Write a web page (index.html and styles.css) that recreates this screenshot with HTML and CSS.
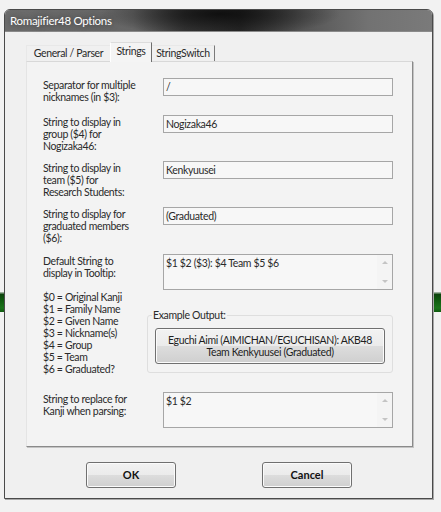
FILE: index.html
```html
<!DOCTYPE html>
<html>
<head>
<meta charset="utf-8">
<title>Romajifier48 Options</title>
<link rel="stylesheet" href="styles.css">
</head>
<body>
<div class="desk-stripe"></div>
<div class="window">
  <div class="titlebar"><span class="title">Romajifier48 Options</span></div>
  <div class="client">
    <div class="tabs">
      <div class="tab tab-general">General / Parser</div>
      <div class="tab tab-strings active">Strings</div>
      <div class="tab tab-switch">StringSwitch</div>
    </div>
    <div class="panel">
      <div class="row r1">
        <div class="label">Separator for multiple<br>nicknames (in $3):</div>
        <div class="field">/</div>
      </div>
      <div class="row r2">
        <div class="label">String to display in<br>group ($4) for<br>Nogizaka46:</div>
        <div class="field">Nogizaka46</div>
      </div>
      <div class="row r3">
        <div class="label">String to display in<br>team ($5) for<br>Research Students:</div>
        <div class="field">Kenkyuusei</div>
      </div>
      <div class="row r4">
        <div class="label">String to display for<br>graduated members<br>($6):</div>
        <div class="field">(Graduated)</div>
      </div>
      <div class="row r5">
        <div class="label">Default String to<br>display in Tooltip:</div>
        <div class="field multi">
          <span class="multi-text">$1 $2 ($3): $4 Team $5 $6</span>
          <span class="scroll"><span class="arrow up"></span><span class="arrow down"></span></span>
        </div>
      </div>
      <div class="legend-row">
        <div class="legend-list">$0 = Original Kanji<br>$1 = Family Name<br>$2 = Given Name<br>$3 = Nickname(s)<br>$4 = Group<br>$5 = Team<br>$6 = Graduated?</div>
        <fieldset class="group">
          <legend class="group-title">Example Output:</legend>
          <div class="example-btn">Eguchi Aimi (AIMICHAN/EGUCHISAN): AKB48<br>Team Kenkyuusei (Graduated)</div>
        </fieldset>
      </div>
      <div class="row r6">
        <div class="label">String to replace for<br>Kanji when parsing:</div>
        <div class="field multi">
          <span class="multi-text">$1 $2</span>
          <span class="scroll"><span class="arrow up"></span><span class="arrow down"></span></span>
        </div>
      </div>
    </div>
    <div class="buttons">
      <div class="btn btn-ok">OK</div>
      <div class="btn btn-cancel">Cancel</div>
    </div>
  </div>
</div>
</body>
</html>
```
FILE: styles.css
```css
* { box-sizing: border-box; }
html, body { margin: 0; padding: 0; }
body {
  width: 441px;
  height: 512px;
  background: #f2f2f2;
  font-family: "Lato", "Liberation Sans", sans-serif;
  font-size: 10.5px;
  letter-spacing: -0.35px;
  color: #2a2a2a;
  position: relative;
  overflow: hidden;
  padding-top: 9px;
}
.desk-stripe {
  position: absolute;
  left: 0; right: 0;
  top: 292px; height: 20px;
  background: linear-gradient(#9bb09b 0, #9bb09b 1px, #0c420c 2px, #0f5a0f 40%, #1a741a 80%, #0f5a0f 100%);
}
.window {
  position: relative;
  margin-left: 4px;
  width: 429px;
  height: 490px;
  border: 1px solid #4a4a4a;
  border-radius: 6px 6px 0 0;
  box-shadow: 1px 1px 0 #a8a8a8;
  background: #f0f0f0;
  display: flex;
  flex-direction: column;
}
.titlebar {
  height: 22px;
  flex: none;
  border-radius: 5px 5px 0 0;
  background:
    radial-gradient(ellipse 120px 22px at 215px 4px, rgba(10,10,10,0.85), rgba(10,10,10,0) 100%),
    linear-gradient(to right, #6c6c6c 0%, #656565 30%, #3a3a3a 42%, #2a2a2a 55%, #555 70%, #727272 85%, #7a7a7a 100%);
  display: flex;
  align-items: center;
  padding-left: 5px;
  border-bottom: 1px solid #8a8a8a;
}
.title {
  color: #ffffff;
  font-size: 11.5px;
  letter-spacing: -0.3px;
  text-shadow: 0 0 6px rgba(0,0,0,0.5);
}
.client {
  flex: 1;
  padding: 10px 0 0 21px;
}
.tabs {
  display: flex;
  align-items: flex-end;
  height: 19px;
  position: relative;
  z-index: 1;
}
.tab {
  height: 16px;
  line-height: 15px;
  text-align: center;
  color: #2a2a2a;
  border-top: 1px solid #e8e8e8;
  border-right: 1px solid #a0a0a0;
  white-space: nowrap;
}
.tab-general { width: 84px; border-left: 1px solid #e8e8e8; border-right: none; }
.tab-strings { width: 42px; }
.tab-switch { width: 63px; border-right: 1px solid #7a7a7a; }
.tab.active {
  height: 20px;
  line-height: 16px;
  margin-bottom: -1px;
  background: #f4f4f4;
  border-left: 1px solid #ffffff;
  border-top: 1px solid #dcdcdc;
  border-right: 1px solid #6e6e6e;
}
.panel {
  width: 387px;
  height: 386px;
  background: #f3f3f3;
  border-top: 1px solid #d8d8d8;
  border-left: 1px solid #e4e4e4;
  border-right: 1px solid #8a8a8a;
  border-bottom: 1px solid #8a8a8a;
  box-shadow: 1px 1px 0 #c4c4c4;
  padding: 16px 0 0 16px;
}
.row {
  display: flex;
  align-items: flex-start;
}
.r1 { height: 37px; }
.r2 { height: 46px; }
.r3 { height: 46px; }
.r4 { height: 47px; }
.r5 { height: 37px; }
.label {
  width: 120px;
  flex: none;
  line-height: 12px;
  padding-top: 1px;
  white-space: nowrap;
}
.field {
  width: 230px;
  height: 18px;
  border: 1px solid #a6a6a6;
  background: #f7f7f7;
  padding-left: 2px;
  line-height: 16px;
  white-space: nowrap;
}
.field.multi {
  height: 36px;
  display: flex;
  justify-content: space-between;
  padding-top: 1px;
}
.multi-text { line-height: 14px; }
.scroll {
  width: 15px;
  margin-top: -1px;
  height: 34px;
  background: #f4f4f4;
  display: flex;
  flex-direction: column;
  justify-content: space-between;
  align-items: center;
  padding: 6px 0 6px;
}
.arrow {
  width: 0; height: 0;
  border-left: 3px solid transparent;
  border-right: 3px solid transparent;
}
.arrow.up { border-bottom: 3px solid #c4c4c4; }
.arrow.down { border-top: 3px solid #c4c4c4; }
.legend-row {
  display: flex;
  align-items: flex-start;
  height: 101px;
}
.legend-list {
  width: 104px;
  flex: none;
  line-height: 12px;
  white-space: nowrap;
}
.group {
  margin: 18px 0 0 0;
  width: 246px;
  border: 1px solid #dedede;
  border-radius: 3px;
  padding: 7px 7px 8px 7px;
  min-width: 0;
}
.group-title {
  padding: 0 1px;
  margin-left: -3px;
  line-height: 12px;
}
.example-btn {
  width: 230px;
  height: 36px;
  border: 1px solid #707070;
  border-radius: 3px;
  background: linear-gradient(#f2f2f2 0%, #ebebeb 50%, #dddddd 50%, #cfcfcf 100%);
  box-shadow: inset 0 0 0 1px #fbfbfb;
  text-align: center;
  line-height: 12px;
  padding-top: 5px;
  color: #1e1e1e;
  white-space: nowrap;
}
.buttons {
  display: flex;
  margin-top: 15px;
  padding-left: 60px;
}
.btn {
  width: 90px;
  height: 26px;
  border: 1px solid #707070;
  border-radius: 3px;
  background: linear-gradient(#f2f2f2 0%, #ebebeb 50%, #dddddd 50%, #cfcfcf 100%);
  box-shadow: inset 0 0 0 1px #fbfbfb;
  text-align: center;
  line-height: 24px;
  font-size: 11px;
  font-weight: bold;
  letter-spacing: 0;
  color: #111;
}
.btn-cancel { margin-left: 86px; }
```
